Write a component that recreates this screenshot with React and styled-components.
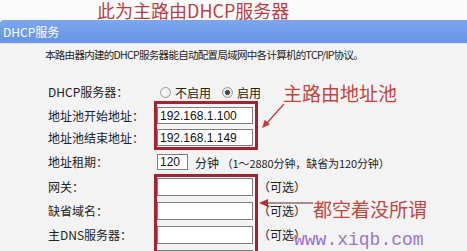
import React from "react";
import styled, { createGlobalStyle } from "styled-components";

const GlobalStyle = createGlobalStyle`
  html, body {
    margin: 0;
    padding: 0;
    background: #f6f6f6;
  }
  body {
    font-family: "Noto Sans CJK SC", "Liberation Sans", sans-serif;
  }
`;

const Shot = styled.div`
  position: relative;
  width: 467px;
  height: 251px;
  overflow: hidden;
  background: #f8f8f8;
`;

const TitleBar = styled.div`
  height: 20px;
  padding-left: 97px;
  background: #fbfbfb;
`;

const Title = styled.h1`
  margin: 0;
  font-size: 18px;
  font-weight: 400;
  line-height: 21px;
  color: #b8413f;
  white-space: nowrap;
`;

const PanelHead = styled.div`
  height: 23px;
  padding-left: 3px;
  line-height: 23px;
  font-size: 12px;
  color: #fff;
  background: linear-gradient(#7ba7ee, #6793e4);
  border-top-left-radius: 4px;
  border-bottom: 1px solid #dfe6f2;
`;

const PanelBody = styled.div`
  padding-top: 4px;
  background: #f3f3f3;
  height: 100%;
`;

const Intro = styled.p`
  margin: 0 0 0 45px;
  font-size: 10.5px;
  line-height: 14px;
  color: #222;
  white-space: nowrap;
  letter-spacing: -0.7px;
`;

const Form = styled.div`
  margin-top: 21px;
  padding-left: 48px;
  display: flex;
  flex-direction: column;
`;

const Row = styled.div`
  display: flex;
  align-items: center;
  height: ${(p) => p.$h}px;
`;

const Label = styled.div`
  width: 106px;
  flex-shrink: 0;
  font-size: 12px;
  line-height: ${(p) => p.$h || 18}px;
  height: ${(p) => p.$h || 18}px;
  color: #222;
  white-space: nowrap;
`;

const Group = styled.div`
  display: flex;
  align-items: flex-start;
`;

const Stack = styled.div`
  display: flex;
  flex-direction: column;
  gap: ${(p) => p.$gap}px;
  padding-top: ${(p) => p.$top}px;
`;

const RedBox = styled.div`
  box-sizing: border-box;
  width: 104px;
  border: 3px solid #a52330;
  padding: ${(p) => p.$pad};
  display: flex;
  flex-direction: column;
  gap: ${(p) => p.$gap}px;
`;

const Field = styled.input`
  display: block;
  box-sizing: border-box;
  width: ${(p) => p.$w || 96}px;
  height: ${(p) => p.$h}px;
  margin: 0 0 0 ${(p) => p.$ml || 0}px;
  padding: 0 0 0 2px;
  border: 1px solid #7d7d7d;
  background: #fff;
  font-family: "Liberation Sans", sans-serif;
  font-size: 12px;
  color: #111;
  outline: none;
`;

const Note = styled.div`
  height: ${(p) => p.$h}px;
  line-height: ${(p) => p.$h}px;
  font-size: 12px;
  color: #222;
  white-space: nowrap;
`;

const Radios = styled.div`
  display: flex;
  align-items: center;
  margin-left: 6px;
  font-size: 12px;
  color: #222;
`;

const Radio = styled.span`
  display: inline-block;
  box-sizing: border-box;
  width: 11px;
  height: 11px;
  border-radius: 50%;
  border: 1px solid #9a9a9a;
  background: ${(p) =>
    p.$on
      ? "radial-gradient(circle, #4a4a4a 0 2.2px, #e8e8e8 2.6px)"
      : "radial-gradient(circle at 40% 40%, #fff, #dcdcdc)"};
  margin-right: 4px;
`;

const RadioText = styled.span`
  margin-right: ${(p) => p.$gap || 0}px;
`;

const LeaseText = styled.span`
  margin-left: 7px;
  font-size: 12px;
  color: #222;
  white-space: nowrap;
`;

const LeaseHint = styled.span`
  font-size: 11px;
  letter-spacing: -0.1px;
`;

const Callout = styled.div`
  position: absolute;
  left: ${(p) => p.$x}px;
  top: ${(p) => p.$y}px;
  font-size: 19px;
  line-height: 22px;
  color: #c0463f;
  white-space: nowrap;
`;

const Watermark = styled.div`
  position: absolute;
  left: 294px;
  top: 229px;
  font-family: "Liberation Mono", monospace;
  font-size: 18px;
  line-height: 22px;
  color: #9c74c6;
  white-space: nowrap;
`;

const Arrows = styled.svg`
  position: absolute;
  left: 0;
  top: 0;
  pointer-events: none;
`;

export default function App() {
  return (
    <Shot>
      <GlobalStyle />
      <TitleBar>
        <Title>此为主路由DHCP服务器</Title>
      </TitleBar>
      <PanelHead>DHCP服务</PanelHead>
      <PanelBody>
        <Intro>本路由器内建的DHCP服务器能自动配置局域网中各计算机的TCP/IP协议。</Intro>
        <Form>
          <Row $h={18}>
            <Label>DHCP服务器：</Label>
            <Radios>
              <Radio />
              <RadioText $gap={11}>不启用</RadioText>
              <Radio $on />
              <RadioText>启用</RadioText>
            </Radios>
          </Row>

          <Group>
            <Stack $top={6} $gap={5}>
              <Label $h={17}>地址池开始地址：</Label>
              <Label $h={17}>地址池结束地址：</Label>
            </Stack>
            <RedBox $pad="3px 2px 1px 0" $gap={5}>
              <Field $h={17} readOnly defaultValue="192.168.1.100" />
              <Field $h={17} readOnly defaultValue="192.168.1.149" />
            </RedBox>
          </Group>

          <Row $h={24}>
            <Label>地址租期：</Label>
            <Field $h={16} $w={31} $ml={3} readOnly defaultValue="120" />
            <LeaseText>
              分钟 <LeaseHint>（1～2880分钟，缺省为120分钟）</LeaseHint>
            </LeaseText>
          </Row>

          <Group>
            <Stack $top={4} $gap={6}>
              <Label>网关：</Label>
              <Label>缺省域名：</Label>
              <Label>主DNS服务器：</Label>
              <Label>备用DNS服务器：</Label>
            </Stack>
            <RedBox $pad="1px 2px 0 0" $gap={6}>
              <Field $h={18} readOnly defaultValue="" />
              <Field $h={18} readOnly defaultValue="" />
              <Field $h={18} readOnly defaultValue="" />
              <Field $h={18} readOnly defaultValue="" />
            </RedBox>
            <Stack $top={4} $gap={6}>
              <Note $h={18}>（可选）</Note>
              <Note $h={18}>（可选）</Note>
              <Note $h={18}>（可选）</Note>
            </Stack>
          </Group>
        </Form>
      </PanelBody>

      <Callout $x={283} $y={82}>主路由地址池</Callout>
      <Callout $x={313} $y={198}>都空着没所谓</Callout>
      <Watermark>www.xiqb.com</Watermark>

      <Arrows width="467" height="251" viewBox="0 0 467 251">
        <line x1="284" y1="104" x2="266" y2="124" stroke="#c0403a" strokeWidth="1.3" />
        <polygon points="262,128 270,124.5 264.8,119.7" fill="#c0403a" />
        <line x1="313" y1="203" x2="266" y2="203" stroke="#5a2b2b" strokeWidth="1.2" />
        <polygon points="259,203 268,199 268,207" fill="#b8302f" />
      </Arrows>
    </Shot>
  );
}
